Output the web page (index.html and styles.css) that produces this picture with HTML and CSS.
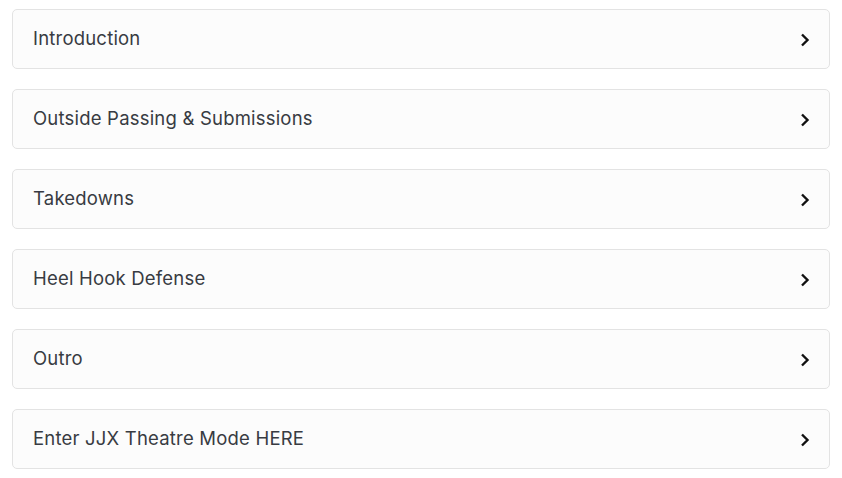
FILE: index.html
```html
<!DOCTYPE html>
<html>
<head>
<meta charset="utf-8">
<link rel="stylesheet" href="styles.css">
</head>
<body>
<div class="list">
  <div class="item"><span class="label">Introduction</span><svg class="chev" viewBox="0 0 10 14" width="10" height="14"><path d="M2 1.5 L7.5 7 L2 12.5" fill="none" stroke="#111" stroke-width="2.4"/></svg></div>
  <div class="item"><span class="label">Outside Passing &amp; Submissions</span><svg class="chev" viewBox="0 0 10 14" width="10" height="14"><path d="M2 1.5 L7.5 7 L2 12.5" fill="none" stroke="#111" stroke-width="2.4"/></svg></div>
  <div class="item"><span class="label">Takedowns</span><svg class="chev" viewBox="0 0 10 14" width="10" height="14"><path d="M2 1.5 L7.5 7 L2 12.5" fill="none" stroke="#111" stroke-width="2.4"/></svg></div>
  <div class="item"><span class="label">Heel Hook Defense</span><svg class="chev" viewBox="0 0 10 14" width="10" height="14"><path d="M2 1.5 L7.5 7 L2 12.5" fill="none" stroke="#111" stroke-width="2.4"/></svg></div>
  <div class="item"><span class="label">Outro</span><svg class="chev" viewBox="0 0 10 14" width="10" height="14"><path d="M2 1.5 L7.5 7 L2 12.5" fill="none" stroke="#111" stroke-width="2.4"/></svg></div>
  <div class="item"><span class="label">Enter JJX Theatre Mode HERE</span><svg class="chev" viewBox="0 0 10 14" width="10" height="14"><path d="M2 1.5 L7.5 7 L2 12.5" fill="none" stroke="#111" stroke-width="2.4"/></svg></div>
</div>
</body>
</html>
```
FILE: styles.css
```css
html, body {
  margin: 0;
  padding: 0;
  background: #ffffff;
}
body {
  font-family: "Inter", "Noto Sans", sans-serif;
}
.list {
  display: flex;
  flex-direction: column;
  gap: 20px;
  padding: 9px 12px 0 12px;
  width: 818px;
}
.item {
  box-sizing: border-box;
  height: 60px;
  border: 1px solid #e3e3e3;
  border-radius: 5px;
  background: #fcfcfc;
  display: flex;
  align-items: center;
  justify-content: space-between;
  padding: 0 19px 0 20px;
}
.label {
  font-size: 18.5px;
  color: #383b42;
  letter-spacing: 0.2px;
  margin-bottom: 2px;
}
.chev {
  display: block;
  margin-top: 1px;
}
```
